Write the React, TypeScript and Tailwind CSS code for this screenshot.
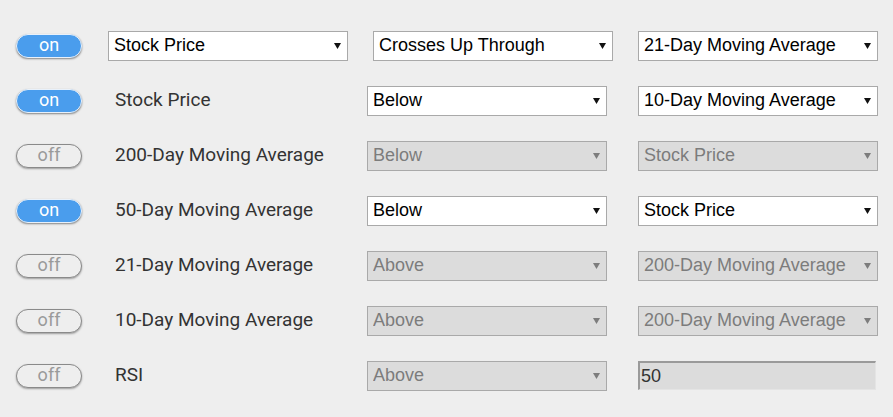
import React from "react";

type Rule = {
  on: boolean;
  label?: string;
  first?: string;
  op: string;
  target: string;
  numeric?: boolean;
};

const rules: Rule[] = [
  { on: true, first: "Stock Price", op: "Crosses Up Through", target: "21-Day Moving Average" },
  { on: true, label: "Stock Price", op: "Below", target: "10-Day Moving Average" },
  { on: false, label: "200-Day Moving Average", op: "Below", target: "Stock Price" },
  { on: true, label: "50-Day Moving Average", op: "Below", target: "Stock Price" },
  { on: false, label: "21-Day Moving Average", op: "Above", target: "200-Day Moving Average" },
  { on: false, label: "10-Day Moving Average", op: "Above", target: "200-Day Moving Average" },
  { on: false, label: "RSI", op: "Above", target: "50", numeric: true },
];

const Toggle = ({ on }: { on: boolean }) =>
  on ? (
    <button className="w-[66px] h-[24px] rounded-full bg-[#4a9ded] border border-[#e8f1fb] shadow-[0_1px_2px_rgba(0,0,0,0.45)] text-white text-[18px] leading-none font-['Roboto',sans-serif] flex items-center justify-center pb-[1px]">
      on
    </button>
  ) : (
    <button className="w-[66px] h-[24px] rounded-full bg-[#eeeeee] border border-[#8a8a8a] shadow-[0_1px_2px_rgba(0,0,0,0.35)] text-[#9a9a9a] text-[18px] leading-none font-['Roboto',sans-serif] flex items-center justify-center pb-[1px]">
      off
    </button>
  );

const Arrow = ({ disabled }: { disabled: boolean }) => (
  <svg
    width="7"
    height="6"
    viewBox="0 0 7 6"
    className="absolute right-[7px] top-[12px] pointer-events-none"
  >
    <path d="M0 0H7L3.5 6Z" fill={disabled ? "#7d7d7d" : "#111111"} />
  </svg>
);

const Select = ({ value, disabled }: { value: string; disabled: boolean }) => (
  <div className="relative w-[240px] h-[30px] shrink-0">
    <select
      disabled={disabled}
      defaultValue={value}
      className={
        disabled
          ? "appearance-none w-full h-full border border-[#a9a9a9] bg-[#dcdcdc] text-[#7c7c7c] pl-[5px] text-[18px] font-['Liberation_Sans',Arial,sans-serif] outline-none"
          : "appearance-none w-full h-full border border-[#a9a9a9] bg-white text-black pl-[5px] text-[18px] font-['Liberation_Sans',Arial,sans-serif] outline-none"
      }
    >
      <option>{value}</option>
    </select>
    <Arrow disabled={disabled} />
  </div>
);

const NumberBox = ({ value }: { value: string }) => (
  <input
    disabled
    defaultValue={value}
    className="w-[238px] h-[29px] shrink-0 bg-[#dcdcdc] border-t-2 border-l-2 border-r border-b border-t-[#9a9a9a] border-l-[#9a9a9a] border-r-[#e4e4e4] border-b-[#e4e4e4] pl-[1px] text-[18px] text-[#333] font-['Liberation_Sans',Arial,sans-serif] outline-none"
  />
);

export default function App() {
  return (
    <div className="min-h-[417px] w-full bg-[#eeeeee] pt-[18px]">
      {rules.map((r, i) => (
        <div key={i} className="flex items-center h-[55px] pl-[16px]">
          <Toggle on={r.on} />
          {r.first ? (
            <div className="flex items-center ml-[26px] gap-[25px]">
              <Select value={r.first} disabled={!r.on} />
              <Select value={r.op} disabled={!r.on} />
              <Select value={r.target} disabled={!r.on} />
            </div>
          ) : (
            <div className="flex items-center ml-[26px]">
              <div className="w-[259px] pl-[7px] text-[19px] text-[#333] font-['Roboto',sans-serif]">
                {r.label}
              </div>
              <Select value={r.op} disabled={!r.on} />
              <div className="ml-[31px]">
                {r.numeric ? (
                  <NumberBox value={r.target} />
                ) : (
                  <Select value={r.target} disabled={!r.on} />
                )}
              </div>
            </div>
          )}
        </div>
      ))}
    </div>
  );
}
